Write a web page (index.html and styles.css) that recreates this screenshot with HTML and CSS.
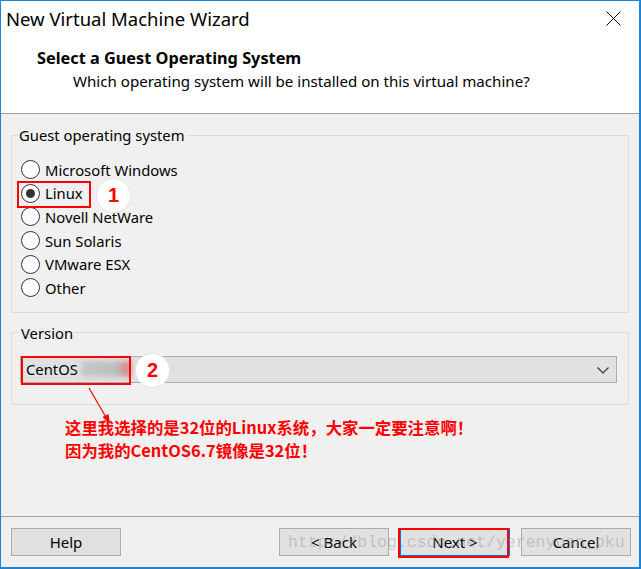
FILE: index.html
```html
<!DOCTYPE html>
<html lang="en">
<head>
    <meta charset="UTF-8">
    <meta name="viewport" content="width=device-width, initial-scale=1.0">
    <title>New Virtual Machine Wizard</title>
    <link rel="stylesheet" href="styles.css">
</head>
<body>
    <div class="window">
        <!-- white top part: caption + page header -->
        <div class="top">
            <div class="titlebar">
                <span class="caption">New Virtual Machine Wizard</span>
                <svg class="close" width="15" height="15" viewBox="0 0 15 15">
                    <path d="M0.5 0.5 L14.5 14.5 M14.5 0.5 L0.5 14.5" stroke="#000" stroke-width="1"/>
                </svg>
            </div>
            <h1 class="page-title">Select a Guest Operating System</h1>
            <p class="page-desc">Which operating system will be installed on this virtual machine?</p>
        </div>

        <div class="content">
            <fieldset class="group">
                <legend>Guest operating system</legend>
                <div class="radios">
                    <label class="radio"><span class="dot"></span>Microsoft Windows</label>
                    <label class="radio checked"><span class="dot"></span>Linux</label>
                    <label class="radio"><span class="dot"></span>Novell NetWare</label>
                    <label class="radio"><span class="dot"></span>Sun Solaris</label>
                    <label class="radio"><span class="dot"></span>VMware ESX</label>
                    <label class="radio"><span class="dot"></span>Other</label>
                </div>
            </fieldset>

            <fieldset class="group version">
                <legend>Version</legend>
                <div class="combo">
                    <span class="combo-text">CentOS</span>
                    <span class="smudge"></span>
                    <svg class="chevron" width="12" height="7" viewBox="0 0 12 7">
                        <path d="M0.5 0.5 L6 6 L11.5 0.5" fill="none" stroke="#333" stroke-width="1.2"/>
                    </svg>
                </div>
            </fieldset>

            <div class="note">
                <p>这里我选择的是32位的Linux系统，大家一定要注意啊！</p>
                <p>因为我的CentOS6.7镜像是32位！</p>
            </div>
        </div>

        <div class="footer">
            <button class="btn">Help</button>
            <div class="spacer"></div>
            <button class="btn">&lt; Back</button>
            <button class="btn default">Next &gt;</button>
            <button class="btn">Cancel</button>
            <span class="watermark">http://blog.csdn.net/yerenyuan_pku</span>
        </div>

        <!-- red annotations drawn on top -->
        <div class="mark box-linux"></div>
        <div class="badge badge-1">1</div>
        <div class="mark box-centos"></div>
        <div class="badge badge-2">2</div>
        <svg class="arrow" width="40" height="45" viewBox="0 0 40 45">
            <path d="M2 2 L20 33" stroke="#e00" stroke-width="1.2" fill="none"/>
            <path d="M23 38 L15.5 31 L21.5 28 Z" fill="#e00"/>
        </svg>
        <div class="mark box-next"></div>
    </div>
</body>
</html>
```

FILE: styles.css
```css
* {
    box-sizing: border-box;
}

body {
    margin: 0;
    font-family: "Noto Sans", Arial, sans-serif;
    font-size: 15px;
    color: #000;
    background: #fff;
}

.window {
    position: relative;
    width: 641px;
    height: 569px;
    border: 1px solid #1c84d6;
    border-right-width: 2px;
    border-bottom-width: 2px;
    display: flex;
    flex-direction: column;
    background: #f0f0f0;
    overflow: hidden;
}

.top {
    background: #fff;
    height: 113px;
    border-bottom: 1px solid #a0a0a0;
}

.titlebar {
    height: 34px;
    display: flex;
    align-items: center;
    justify-content: space-between;
    padding: 0 18px 0 5px;
}

.caption {
    font-size: 18.5px;
}

.close {
    display: block;
}

.page-title {
    margin: 13px 0 0 36px;
    font-size: 16.3px;
    font-weight: bold;
    line-height: 20px;
}

.page-desc {
    margin: 3px 0 0 72px;
    font-size: 15.1px;
    line-height: 20px;
}

.content {
    flex: 1;
    padding: 11px 10px 0 10px;
}

.group {
    margin: 0;
    padding: 0 10px 12px 6px;
    border: 1px solid #dcdcdc;
}

.group legend {
    padding: 0 1px;
    font-size: 14.8px;
    line-height: 20px;
}

.radios {
    margin-top: 13px;
    display: flex;
    flex-direction: column;
}

.radio {
    display: flex;
    align-items: center;
    height: 23.6px;
    font-size: 14.8px;
    padding-left: 3px;
}

.dot {
    width: 19px;
    height: 19px;
    border: 1px solid #333;
    border-radius: 50%;
    background: #fff;
    margin-right: 5px;
    display: flex;
    align-items: center;
    justify-content: center;
}

.radio.checked .dot::after {
    content: "";
    width: 9px;
    height: 9px;
    border-radius: 50%;
    background: #333;
}

.version {
    margin-top: 10px;
    padding: 0 11px 21px 8px;
}

.combo {
    position: relative;
    margin-top: 13px;
    height: 27px;
    background: #e1e1e1;
    border: 1px solid #adadad;
    display: flex;
    align-items: center;
    padding-left: 5px;
}

.combo-text {
    font-size: 14.8px;
}

.smudge {
    width: 50px;
    height: 16px;
    margin-left: 3px;
    background: linear-gradient(to right, #c8c8c8, #bdbdbd 70%, #e08080);
    filter: blur(2.5px);
}

.chevron {
    position: absolute;
    right: 7px;
    top: 10px;
}

.note {
    margin-top: 11px;
    padding-left: 54px;
    color: #f00;
    font-family: "Noto Sans CJK SC", "Noto Sans", sans-serif;
    font-weight: bold;
    font-size: 16.4px;
    line-height: 23px;
}

.note p {
    margin: 0;
}

.footer {
    position: relative;
    height: 51px;
    border-top: 1px solid #a0a0a0;
    display: flex;
    align-items: flex-start;
    padding: 11px 8px 0 10px;
    gap: 11px;
}

.spacer {
    flex: 1;
}

.btn {
    width: 110px;
    height: 28px;
    background: #e1e1e1;
    border: 1px solid #adadad;
    font-family: "Noto Sans", Arial, sans-serif;
    font-size: 15px;
    color: #000;
    padding: 0;
}

.btn.default {
    border-color: #0078d7;
}

.watermark {
    position: absolute;
    left: 287px;
    top: 16px;
    font-family: "Liberation Mono", monospace;
    font-size: 16.5px;
    color: rgba(150, 150, 150, 0.45);
    pointer-events: none;
}

.mark {
    position: absolute;
    border: 2px solid #f00;
}

.box-linux {
    left: 16px;
    top: 180px;
    width: 74px;
    height: 27px;
}

.box-centos {
    left: 20px;
    top: 355px;
    width: 110px;
    height: 29px;
}

.box-next {
    left: 397px;
    top: 527px;
    width: 111px;
    height: 30px;
}

.badge {
    position: absolute;
    width: 35px;
    height: 35px;
    border-radius: 50%;
    background: #fff;
    border: 1px solid #e4e4e4;
    color: #f00;
    font-family: "Liberation Sans", Arial, sans-serif;
    font-weight: bold;
    font-size: 20px;
    display: flex;
    align-items: center;
    justify-content: center;
}

.badge-1 {
    left: 95px;
    top: 177px;
}

.badge-2 {
    left: 134px;
    top: 352px;
}

.arrow {
    position: absolute;
    left: 86px;
    top: 385px;
}
```
